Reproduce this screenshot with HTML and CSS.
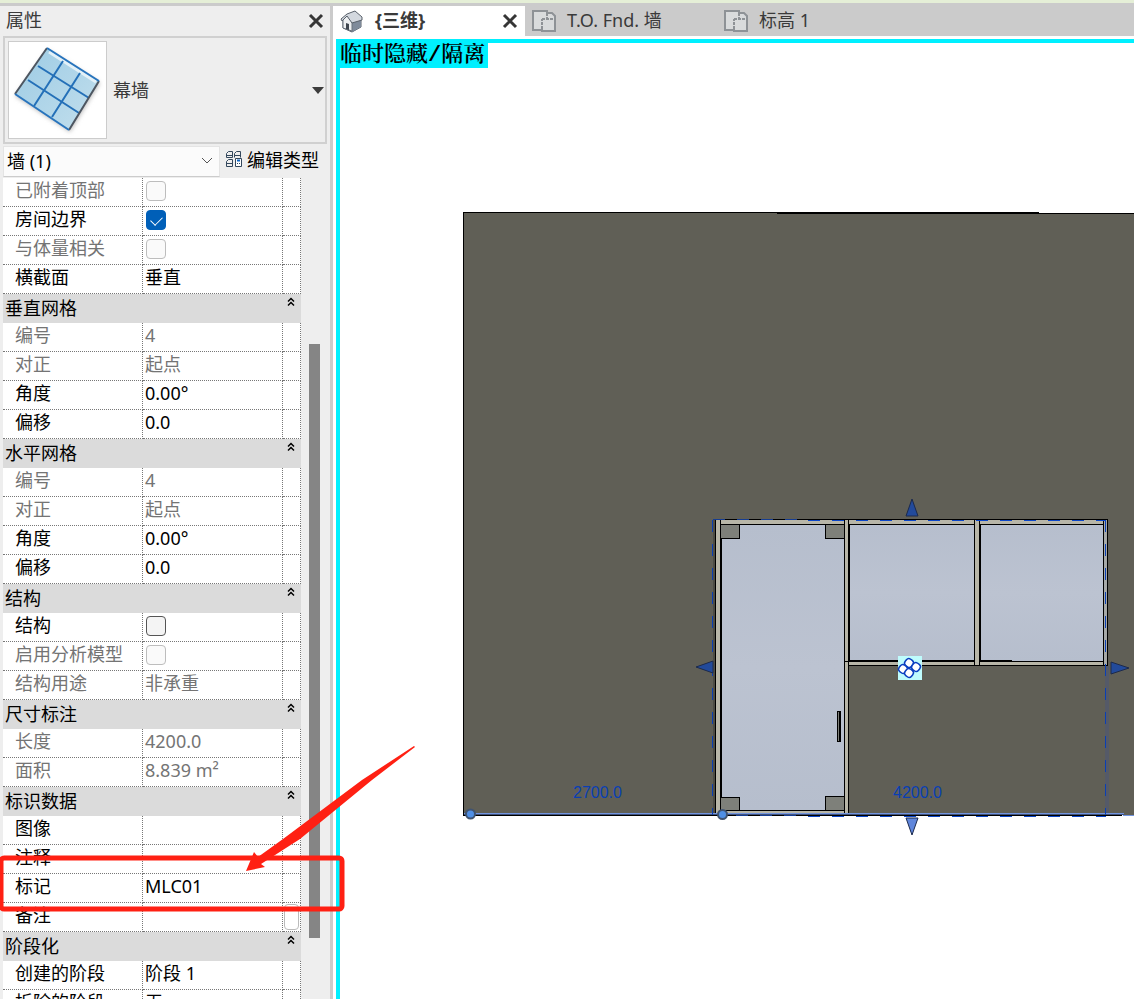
FILE: index.html
```html
<!DOCTYPE html>
<html lang="zh-CN">
<head>
<meta charset="utf-8">
<title>属性</title>
<link rel="stylesheet" href="styles.css">
</head>
<body>
<div class="ribbon-edge"></div>
<div class="workspace">
  <aside class="properties">
    <header class="panel-title">
      <h1>属性</h1>
      <button class="close" aria-label="关闭属性"><svg width="16" height="16" viewBox="0 0 16 16"><path d="M2 2L14 14M14 2L2 14"/></svg></button>
    </header>
    <button class="type-selector">
      <span class="thumb">
        <svg width="97" height="96" viewBox="0 0 97 96">
          <defs>
            <linearGradient id="glass" x1="0" y1="0" x2="1" y2="1"><stop offset="0" stop-color="#9ccbe4"/><stop offset="1" stop-color="#c3dfed"/></linearGradient>
            <filter id="soft" x="-20%" y="-20%" width="140%" height="140%"><feGaussianBlur stdDeviation="2"/></filter>
          </defs>
          <path d="M39 8L91 41L61 90L6 54Z" fill="#bbb" filter="url(#soft)"/>
          <path d="M38 6L90 39L60 88L6 52Z" fill="url(#glass)"/>
          <path d="M40 10L87 40" stroke="#e4f1f8" stroke-width="3"/>
          <path d="M54 19L25 64M71 31L43 75M29 24L80 56M19 38L70 71" stroke="#2470b8" stroke-width="2"/>
          <path d="M38 6L6 52M90 39L60 88" stroke="#4d5661" stroke-width="2"/>
          <path d="M38 6L90 39M6 52L60 88" stroke="#2874bd" stroke-width="2"/>
        </svg>
      </span>
      <span class="type-name">幕墙</span>
      <svg class="caret" width="12" height="7" viewBox="0 0 12 7"><path d="M0 0H12L6 7Z" fill="#3c3c3c"/></svg>
    </button>
    <div class="filter-row">
      <div class="combo">
        <select aria-label="图元筛选"><option>墙 (1)</option></select>
        <svg class="chevron" width="12" height="8" viewBox="0 0 12 8"><path d="M1 1L6 6L11 1" fill="none" stroke="#555"/></svg>
      </div>
      <button class="edit-type">
        <svg width="17" height="17" viewBox="0 0 17 17" fill="none" stroke="#33475c"><path d="M2.500 .5H6.500V6.500H.5V2.500ZM10.500 .5H14.500V6.500M8.500 6.500V2.500L10.500 .5M8.500 4.500H14.500M.5 4.500H6.500M2.500 8.500H6.500V15.500H.5V10.500ZM.5 12.500H6.500"/><path d="M9.500 7.500H15.500V15.500H9.500Z" fill="#fff"/><path d="M11 9.500H14" stroke="#0a62c2" stroke-width="2"/><path d="M11 12.500H12M13 12.500H14" /></svg>
        <span>编辑类型</span>
      </button>
    </div>
    <div class="grid-area">
      <table class="grid">
        <colgroup><col class="col-name"><col class="col-value"><col class="col-extra"></colgroup>
        <tbody>
          <tr class="off"><th scope="row"><label for="top">已附着顶部</label></th><td><input type="checkbox" id="top" disabled></td><td></td></tr>
          <tr><th scope="row"><label for="room">房间边界</label></th><td><input type="checkbox" id="room" checked></td><td></td></tr>
          <tr class="off"><th scope="row"><label for="mass">与体量相关</label></th><td><input type="checkbox" id="mass" disabled></td><td></td></tr>
          <tr><th scope="row">横截面</th><td>垂直</td><td></td></tr>
        </tbody>
        <tbody>
          <tr class="group"><th colspan="3" scope="rowgroup"><button><span>垂直网格</span><svg width="8" height="10" viewBox="0 0 8 10"><path d="M1 4.500L4 1.500L7 4.500M1 8.500L4 5.500L7 8.500"/></svg></button></th></tr>
          <tr class="off"><th scope="row">编号</th><td>4</td><td></td></tr>
          <tr class="off"><th scope="row">对正</th><td>起点</td><td></td></tr>
          <tr><th scope="row"><label for="va">角度</label></th><td><input type="text" id="va" value="0.00°"></td><td></td></tr>
          <tr><th scope="row"><label for="vo">偏移</label></th><td><input type="text" id="vo" value="0.0"></td><td></td></tr>
        </tbody>
        <tbody>
          <tr class="group"><th colspan="3" scope="rowgroup"><button><span>水平网格</span><svg width="8" height="10" viewBox="0 0 8 10"><path d="M1 4.500L4 1.500L7 4.500M1 8.500L4 5.500L7 8.500"/></svg></button></th></tr>
          <tr class="off"><th scope="row">编号</th><td>4</td><td></td></tr>
          <tr class="off"><th scope="row">对正</th><td>起点</td><td></td></tr>
          <tr><th scope="row"><label for="ha">角度</label></th><td><input type="text" id="ha" value="0.00°"></td><td></td></tr>
          <tr><th scope="row"><label for="ho">偏移</label></th><td><input type="text" id="ho" value="0.0"></td><td></td></tr>
        </tbody>
        <tbody>
          <tr class="group"><th colspan="3" scope="rowgroup"><button><span>结构</span><svg width="8" height="10" viewBox="0 0 8 10"><path d="M1 4.500L4 1.500L7 4.500M1 8.500L4 5.500L7 8.500"/></svg></button></th></tr>
          <tr><th scope="row"><label for="st">结构</label></th><td><input type="checkbox" id="st"></td><td></td></tr>
          <tr class="off"><th scope="row"><label for="an">启用分析模型</label></th><td><input type="checkbox" id="an" disabled></td><td></td></tr>
          <tr class="off"><th scope="row">结构用途</th><td>非承重</td><td></td></tr>
        </tbody>
        <tbody>
          <tr class="group"><th colspan="3" scope="rowgroup"><button><span>尺寸标注</span><svg width="8" height="10" viewBox="0 0 8 10"><path d="M1 4.500L4 1.500L7 4.500M1 8.500L4 5.500L7 8.500"/></svg></button></th></tr>
          <tr class="off"><th scope="row">长度</th><td>4200.0</td><td></td></tr>
          <tr class="off"><th scope="row">面积</th><td>8.839 m²</td><td></td></tr>
        </tbody>
        <tbody>
          <tr class="group"><th colspan="3" scope="rowgroup"><button><span>标识数据</span><svg width="8" height="10" viewBox="0 0 8 10"><path d="M1 4.500L4 1.500L7 4.500M1 8.500L4 5.500L7 8.500"/></svg></button></th></tr>
          <tr><th scope="row">图像</th><td></td><td></td></tr>
          <tr><th scope="row"><label for="cm">注释</label></th><td><input type="text" id="cm"></td><td></td></tr>
          <tr><th scope="row"><label for="mk">标记</label></th><td><input type="text" id="mk" value="MLC01"></td><td></td></tr>
          <tr><th scope="row"><label for="nt">备注</label></th><td><input type="text" id="nt"></td><td class="extra"><button class="browse" aria-label="编辑备注"></button></td></tr>
        </tbody>
        <tbody>
          <tr class="group"><th colspan="3" scope="rowgroup"><button><span>阶段化</span><svg width="8" height="10" viewBox="0 0 8 10"><path d="M1 4.500L4 1.500L7 4.500M1 8.500L4 5.500L7 8.500"/></svg></button></th></tr>
          <tr><th scope="row">创建的阶段</th><td>阶段 1</td><td></td></tr>
          <tr><th scope="row">拆除的阶段</th><td>无</td><td></td></tr>
        </tbody>
      </table>
      <div class="scrollbar"><div class="scroll-thumb"></div></div>
    </div>
  </aside>

  <main class="viewer">
    <nav class="tabs">
      <div class="tab active">
        <svg width="24" height="24" viewBox="0 0 24 24"><path d="M3 11L12 14L21 10V18L12 23L3 19Z" fill="#9aa4b1" stroke="#59616b"/><path d="M12 13L21 10V18L12 23Z" fill="#7f8b9b"/><path d="M3 11L7 6L12 13V22L3 19Z" fill="#eef0f2" stroke="#6b737d"/><path d="M7 5L15 2L22 8V11L12 14L7 7L2 12L1 10Z" fill="#d3d8df" stroke="#59616b"/><path d="M6 14L9 15V21L6 20Z" fill="#3f464f"/></svg>
        <button class="tab-name">{三维}</button>
        <button class="close" aria-label="关闭视图"><svg width="16" height="16" viewBox="0 0 16 16"><path d="M2 2L14 14M14 2L2 14"/></svg></button>
      </div>
      <div class="tab">
        <svg width="24" height="24" viewBox="0 0 24 24"><path d="M1 2H15V4H20L23 7V22H10V21H1Z" fill="#d9dbdc" stroke="#8e9296" stroke-width="2"/><path d="M10 20V10M10 10H23M15 4V10" fill="none" stroke="#8e9296" stroke-width="2" stroke-dasharray="3 1"/></svg>
        <button class="tab-name">T.O. Fnd. 墙</button>
      </div>
      <div class="tab">
        <svg width="24" height="24" viewBox="0 0 24 24"><path d="M1 2H15V4H20L23 7V22H10V21H1Z" fill="#d9dbdc" stroke="#8e9296" stroke-width="2"/><path d="M10 20V10M10 10H23M15 4V10" fill="none" stroke="#8e9296" stroke-width="2" stroke-dasharray="3 1"/></svg>
        <button class="tab-name">标高 1</button>
      </div>
    </nav>
    <section class="canvas">
      <svg class="model" width="100%" height="100%">
        <defs>
          <linearGradient id="pane" x1="0" y1="0" x2="0" y2="1"><stop offset="0" stop-color="#b6becd"/><stop offset=".5" stop-color="#bcc3d1"/><stop offset="1" stop-color="#b6becd"/></linearGradient>
        </defs>
        <g transform="translate(-340 -43)">
          <rect x="463" y="212" width="4000" height="603" fill="#605f56"/>
          <rect x="1039" y="212" width="4000" height="1" fill="#fff"/>
          <path d="M463 212H1039V214H777V213H464V816H463ZM1039 213H5000V214H1039ZM463 815H1122V816H463Z" fill="#000"/>
          <!-- frame -->
          <rect x="713" y="520" width="2" height="293" fill="#4d4c45"/>
          <rect x="715" y="519" width="134" height="296" fill="#000"/>
          <rect x="848" y="519" width="260" height="147" fill="#000"/>
          <g fill="#b8b6a8">
            <rect x="716" y="520" width="4" height="294"/>
            <rect x="721" y="520" width="123" height="4"/>
            <rect x="721" y="811" width="123" height="3"/>
            <rect x="845" y="520" width="3" height="294"/>
            <rect x="849" y="520" width="125" height="4"/>
            <rect x="975" y="520" width="4" height="145"/>
            <rect x="980" y="520" width="123" height="4"/>
            <rect x="849" y="662" width="125" height="3"/>
            <rect x="980" y="662" width="123" height="3"/>
            <rect x="1104" y="520" width="3" height="145" fill="#a6a9a8"/>
          </g>
          <rect x="844" y="661" width="4" height="1" fill="#000"/>
          <!-- glass -->
          <g fill="url(#pane)">
            <rect x="722" y="525" width="122" height="285"/>
            <rect x="850" y="525" width="124" height="135"/>
            <rect x="981" y="525" width="122" height="136"/>
          </g>
          <rect x="981" y="660" width="31" height="1" fill="#000"/>
          <!-- patch fittings -->
          <g fill="#000">
            <rect x="721" y="525" width="19" height="14"/><rect x="825" y="525" width="19" height="14"/>
            <rect x="721" y="797" width="19" height="14"/><rect x="825" y="796" width="19" height="15"/>
            <rect x="837" y="711" width="4" height="31"/>
          </g>
          <g fill="#7e807a">
            <rect x="721" y="525" width="18" height="13"/><rect x="826" y="525" width="18" height="13"/>
            <rect x="721" y="798" width="18" height="12"/><rect x="826" y="797" width="18" height="13"/>
            <rect x="838" y="712" width="1" height="29"/>
          </g>
          <!-- selection outline -->
          <rect x="1105" y="666" width="4" height="147" fill="#555a68"/>
          <path d="M464 813.500H1124M1123 815.500H5000" stroke="#7295e0" fill="none"/>
          <path d="M464 814.500H1124" stroke="#40527c" fill="none"/>
          <path d="M712.500 520V815M1105.500 520V815" stroke="#0a3fb4" stroke-dasharray="12 12" fill="none"/>
          <path d="M713 519.500H800M736 815.500H800" stroke="#163d91" stroke-dasharray="12 12" fill="none"/>
          <path d="M808 520.500H1106M808 816.500H1106" stroke="#0a45c8" stroke-dasharray="12 12" fill="none"/>
          <!-- drag handles -->
          <g fill="#224a9b" stroke="#1c2a4c">
            <path d="M912 499L918 516H906Z"/><path d="M696 667L713 661V673Z"/><path d="M1129 668L1111 662V674Z"/>
            <path d="M906 818H918L912 835Z" fill="#5f86dc"/>
          </g>
          <g fill="#4f8fe6" stroke="#3f5371" stroke-width="2"><circle cx="470.500" cy="814" r="4.500"/><circle cx="722.500" cy="814.500" r="4.500"/></g>
          <!-- grid pin -->
          <rect x="898" y="656" width="24" height="24" fill="#bffcfd"/>
          <g fill="#fff" stroke="#0a3fc0" stroke-width="1.500">
            <rect x="-4" y="-4" width="8" height="8" rx="3" transform="translate(909 663) rotate(38)"/>
            <rect x="-4" y="-4" width="8" height="8" rx="3" transform="translate(916 667) rotate(38)"/>
            <rect x="-4" y="-4" width="8" height="8" rx="3" transform="translate(903 669) rotate(38)"/>
            <rect x="-4" y="-4" width="8" height="8" rx="3" transform="translate(909 673) rotate(38)"/>
          </g>
          <text class="dim" x="573" y="798">2700.0</text>
          <text class="dim" x="893" y="798">4200.0</text>
        </g>
      </svg>
      <div class="mode-label">临时隐藏/隔离</div>
    </section>
  </main>
</div>
<svg class="markup" width="430" height="920" viewBox="0 0 430 920">
  <path d="M414 746L362 780L283 839L258 857L254 852L246 871L265 867L261 864L300 839L372 780L415 747Z" fill="#ff2013"/>
  <rect x="1" y="858" width="341" height="51" rx="3" fill="none" stroke="#ff2013" stroke-width="5"/>
</svg>
</body>
</html>
```
FILE: styles.css
```css
* { box-sizing: border-box; }
html, body { height: 100%; }
body {
  margin: 0;
  display: flex;
  flex-direction: column;
  position: relative;
  overflow: hidden;
  background: #fff;
  color: #000;
  font: 18px/24px "Noto Sans", "Noto Sans CJK SC", sans-serif;
}
button, input, select { font: inherit; color: inherit; margin: 0; padding: 0; border: 0; background: none; }
button { display: flex; align-items: center; text-align: left; }
svg { display: block; flex: none; }

.ribbon-edge { height: 6px; flex: none; background: #e5efd7; border-bottom: 3px solid #cbcbcb; }
.workspace { flex: 1; min-height: 0; display: flex; }

/* Properties palette */
.properties {
  width: 333px;
  flex: none;
  display: flex;
  flex-direction: column;
  background: #eee;
  border-right: 3px solid #cbcbcb;
}
.panel-title { height: 30px; flex: none; display: flex; justify-content: space-between; align-items: center; padding: 0 6px; color: #3a3a3a; }
.panel-title h1 { margin: 0; padding-bottom: 2px; font-size: 18px; font-weight: 400; }
.close path { stroke: #363636; stroke-width: 3; }
.type-selector { margin: 0 3px; height: 108px; flex: none; padding: 0 1px 0 3px; border: 2px solid #d0d0d0; color: #3a3a3a; }
.thumb { border: 1px solid #ccc; background: #fff; }
.type-name { flex: 1; margin-left: 6px; }
.filter-row { height: 34px; flex: none; display: flex; align-items: center; padding-left: 3px; gap: 6px; }
.combo { display: grid; align-items: center; width: 217px; height: 31px; background: #fbfbfb; border: 1px solid #e4e4e4; border-bottom-color: #ccc; }
.combo select { grid-area: 1 / 1; appearance: none; height: 29px; padding-left: 3px; }
.chevron { grid-area: 1 / 1; justify-self: end; margin-right: 6px; pointer-events: none; }
.edit-type { gap: 4px; padding-bottom: 3px; }

/* Parameter grid */
.grid-area { flex: 1; min-height: 0; display: flex; overflow: hidden; padding-left: 3px; }
.grid { width: 298px; height: max-content; flex: none; table-layout: fixed; border-collapse: separate; border-spacing: 0; background: #fff; }
.col-name { width: 140px; }
.col-value { width: 140px; }
.col-extra { width: 18px; }
.grid tr { height: 29px; }
.grid th, .grid td {
  height: 29px;
  padding: 0 0 4px 2px;
  border-right: 1px dotted #777;
  border-bottom: 1px dotted #777;
  font-weight: 400;
  text-align: left;
  line-height: 24px;
  white-space: nowrap;
}
.grid tr:not(.group) th { padding-left: 12px; }
.grid .off { color: #747474; }
.grid .group th { padding: 0; border-right: 0; border-bottom: 0; background: #dbdbdb; }
.group button { width: 100%; height: 29px; padding: 0 6px 1px 2px; justify-content: space-between; }
.group button svg { margin-bottom: 12px; }
.group path { fill: none; stroke: #000; stroke-width: 1.5; }
.grid input[type="text"] { display: block; width: 100%; height: 24px; }
.grid input[type="checkbox"] {
  appearance: none;
  display: block;
  width: 20px;
  height: 20px;
  margin: 2px 0 0 1px;
  border: 1px solid #555;
  border-radius: 4px;
  background: #f4f4f4;
}
.grid input[type="checkbox"]:disabled { border-color: #bdbdbd; background: #fafafa; }
.grid input[type="checkbox"]:checked { display: grid; place-items: center; border-color: #005fb8; background: #005fb8; }
.grid input[type="checkbox"]:checked::before {
  content: "";
  width: 10px;
  height: 6px;
  margin-bottom: 2px;
  border: solid #fff;
  border-width: 0 0 1px 1px;
  rotate: -45deg;
}
.grid .extra { padding: 0 1px; }
.browse { width: 15px; height: 26px; border: 1px solid #bbb; border-radius: 4px; background: #fff; }
.scrollbar { flex: 1; padding: 166px 0 61px 8px; }
.scroll-thumb { width: 11px; height: 100%; background: #858585; }

/* Views */
.viewer { flex: 1; min-width: 0; display: flex; flex-direction: column; }
.tabs { height: 30px; flex: none; display: flex; background: #cbcbcb; color: #3a3a3a; }
.tab { width: 192px; display: flex; align-items: center; gap: 11px; padding: 0 7px; }
.tab-name { flex: 1; padding-bottom: 2px; }
.active { background: #fff; font-weight: 700; }
.canvas {
  flex: 1;
  min-height: 0;
  position: relative;
  overflow: hidden;
  margin: 3px 0 0 3px;
  border: solid #00f0ff;
  border-width: 4px 0 0 4px;
}
.model { overflow: hidden; }
.dim { font: 16px "Liberation Sans", Arial, sans-serif; fill: #0a3fb4; }
.mode-label {
  position: absolute;
  left: 0;
  top: 0;
  height: 25px;
  padding-right: 3px;
  background: #00f0ff;
  font: 600 22px/25px "Liberation Mono", "Noto Serif CJK SC", "Noto Sans CJK SC", serif;
}
.markup { position: absolute; left: 0; top: 0; pointer-events: none; }
```
